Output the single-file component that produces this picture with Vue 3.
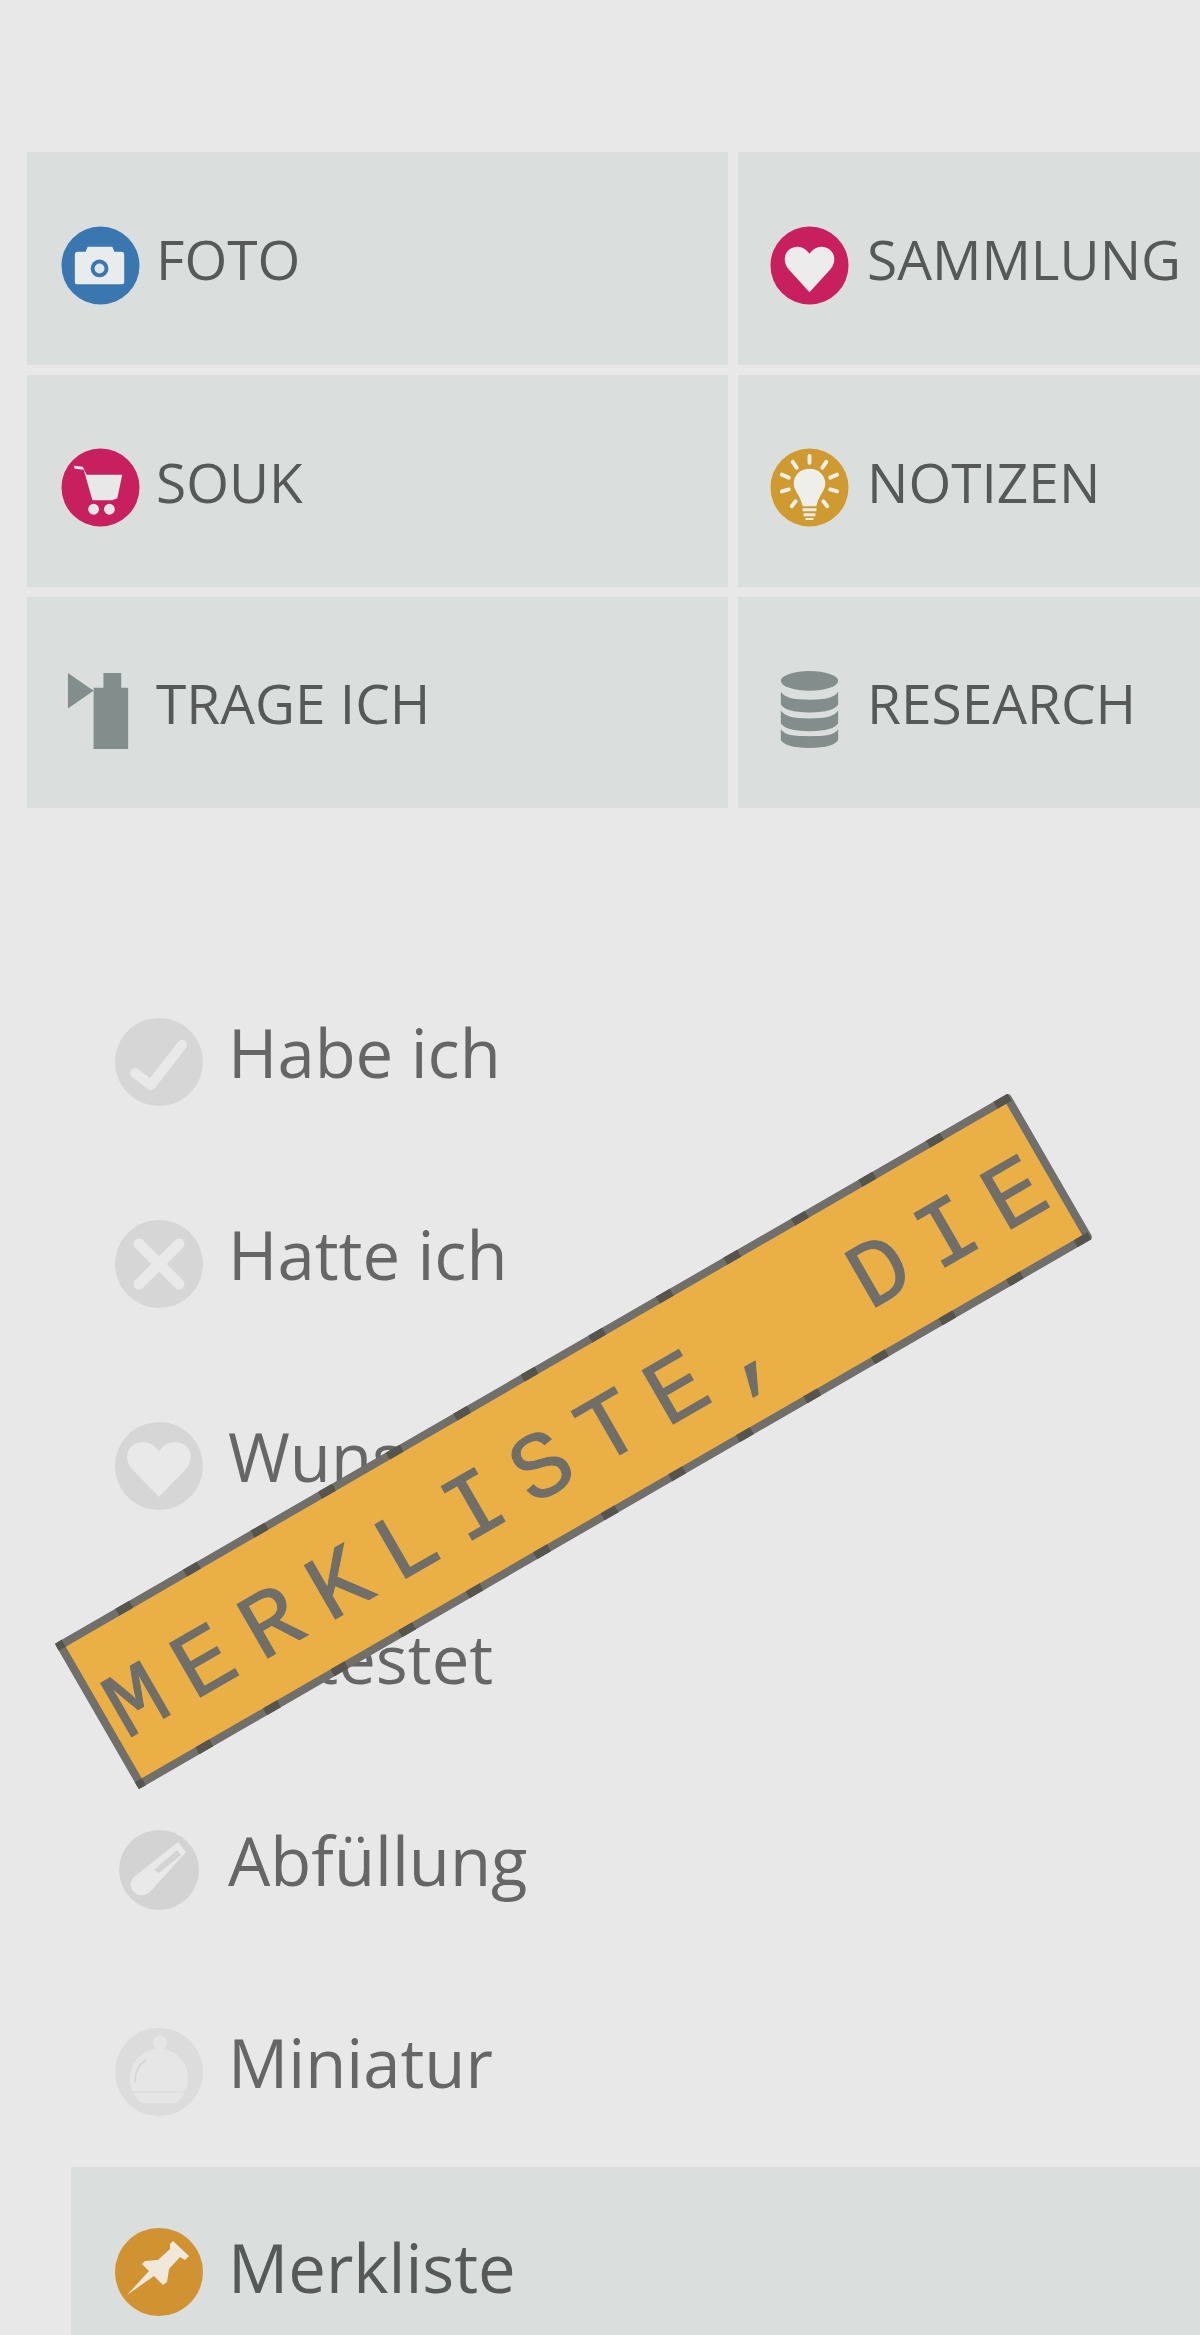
<template>
  <div class="page">
    <!-- obere Kacheln -->
    <div class="tile-grid">
      <a v-for="tile in tiles" :key="tile.label" class="tile">
        <svg class="tile-icon" viewBox="0 0 80 80" v-html="tile.icon"></svg>
        <span class="tile-label">{{ tile.label }}</span>
      </a>
    </div>

    <!-- Liste -->
    <ul class="status-list">
      <li
        v-for="row in rows"
        :key="row.label"
        class="status-row"
        :class="{ active: row.active }"
      >
        <svg class="status-icon" viewBox="0 0 88 88" v-html="row.icon"></svg>
        <span class="status-label">{{ row.label }}</span>
      </li>
    </ul>

    <!-- Hinweis-Banner -->
    <div class="banner">
      <span class="banner-text">MERKLISTE, DIE</span>
    </div>
  </div>
</template>

<script setup>
const tiles = [
  {
    label: 'FOTO',
    icon: `<circle cx="40" cy="40" r="39.5" fill="#3a77b1"/>
      <path d="M14 29q0-3 3-3h8l2-5h25l2 5h7q3 0 3 3v28q0 2-2 2H16q-2 0-2-2z" fill="#e8ecec"/>
      <circle cx="39" cy="43" r="9" fill="#3a77b1"/><circle cx="39" cy="43" r="5" fill="#dfe6e8"/>`
  },
  {
    label: 'SAMMLUNG',
    icon: `<circle cx="40" cy="40" r="39.5" fill="#c81f5e"/>
      <path d="M40 67 19 44C10 33 17 21 28 21c5 0 9 3 12 7 3-4 7-7 12-7 11 0 18 12 9 23z" fill="#ececec"/>`
  },
  {
    label: 'SOUK',
    icon: `<circle cx="40" cy="40" r="39.500" fill="#c81f5e"/>
      <path d="M13 18l9 1 4 8h36l-5 24-5 2H32l-1-3-8-28-9-1z" fill="#e8e8e8"/>
      <circle cx="33" cy="62" r="5.500" fill="#e8e8e8"/><circle cx="49" cy="62" r="5.500" fill="#e8e8e8"/>`
  },
  {
    label: 'NOTIZEN',
    icon: `<circle cx="40" cy="40" r="39.500" fill="#cf9a2f"/>
      <path d="M40 21c-10 0-16 7-16 15 0 8 7 12 9 23h14c2-11 9-15 9-23 0-8-6-15-16-15z" fill="#eeeeea"/>
      <path d="M33 61h14v3H33zM34 66h12v3H34zM36 71h8v2h-8z" fill="#eeeeea"/>
      <path d="M40 8v7M23 14l4 6M57 14l-4 6M12 27l7 3M68 27l-7 3M12 44l7-2M68 44l-7-2M22 59l4-5M58 59l-4-5" stroke="#eeeeea" stroke-width="4" stroke-linecap="round"/>`
  },
  {
    label: 'TRAGE ICH',
    icon: `<path d="M7 3v36L33 21z" fill="#828d8c"/>
      <path d="M33 18h10V3h18v15h7v62H33z" fill="#828d8c"/>`
  },
  {
    label: 'RESEARCH',
    icon: `<ellipse cx="40" cy="11" rx="29" ry="10" fill="#828d8c"/>
      <path d="M11 22c4 6 12 8 29 8s25-2 29-8v13c-3 5-12 8-29 8S14 40 11 35z" fill="#828d8c"/>
      <path d="M11 41c4 6 12 8 29 8s25-2 29-8v13c-3 5-12 8-29 8S14 59 11 54z" fill="#828d8c"/>
      <path d="M11 60c4 6 12 7 29 7s25-1 29-7v11c-3 5-12 8-29 8S14 76 11 71z" fill="#828d8c"/>`
  }
]

const grey = '#d6d6d6'
const light = '#e9e9e9'

const rows = [
  {
    label: 'Habe ich',
    icon: `<circle cx="44" cy="44" r="44" fill="${grey}"/>
      <path d="M20 55l16 12 31-40" fill="none" stroke="${light}" stroke-width="10" stroke-linecap="round" stroke-linejoin="round"/>`
  },
  {
    label: 'Hatte ich',
    icon: `<circle cx="44" cy="44" r="44" fill="${grey}"/>
      <path d="M24 24l40 40M64 24L24 64" fill="none" stroke="${light}" stroke-width="11" stroke-linecap="round"/>`
  },
  {
    label: 'Wunschliste',
    icon: `<circle cx="44" cy="44" r="44" fill="${grey}"/>
      <path d="M44 75 18 48C6 35 14 20 28 20c7 0 12 4 16 9 4-5 9-9 16-9 14 0 22 15 10 28z" fill="${light}"/>`
  },
  {
    label: 'Getestet',
    icon: `<circle cx="44" cy="44" r="44" fill="${grey}"/>`
  },
  {
    label: 'Abfüllung',
    icon: `<circle cx="44" cy="44" r="40" fill="#d3d3d3"/>
      <path d="M63 16l8 10-36 40c-6 5-12 4-16 0s-5-10 0-15z" fill="${light}"/>
      <path d="M62 24l4 5-22 18-5-3z" fill="#d3d3d3"/>`
  },
  {
    label: 'Miniatur',
    icon: `<circle cx="44" cy="44" r="44" fill="#dcdcdc"/>
      <circle cx="45" cy="15" r="7" fill="#e6e6e6"/>
      <path d="M44 21c-18 0-29 14-29 29 0 10 4 19 12 25h34c8-6 12-15 12-25 0-15-11-29-29-29z" fill="#e6e6e6"/>
      <path d="M20 54c0-11 4-18 11-22" fill="none" stroke="#d4d4d4" stroke-width="1.500" stroke-linecap="round"/>
      <path d="M18 64h52" stroke="#dcdcdc" stroke-width="1.500"/>`
  },
  {
    label: 'Merkliste',
    active: true,
    icon: `<circle cx="44" cy="44" r="44" fill="#d19232"/>
      <path d="M58 13 74 28l-4 4-5-3-11 12-2 13-4 3-9-9-27 19 22-24-7-7 3-3 13-1 12-11v-5z" fill="#efe9dc"/>`
  }
]
</script>

<style scoped>
.page {
  position: relative;
  width: 1200px;
  height: 2335px;
  overflow: hidden;
  background: #e8e8e8;
  font-family: "Open Sans", "Liberation Sans", sans-serif;
  padding-top: 152px;
  box-sizing: border-box;
}

.tile-grid {
  display: grid;
  grid-template-columns: 701px 701px;
  grid-template-rows: 213px 212px 211px;
  gap: 10px;
  margin-left: 27px;
}

.tile {
  display: flex;
  align-items: center;
  gap: 16px;
  padding-left: 34px;
  background: #dadedd;
  color: #565958;
}

.tile:nth-child(even) {
  gap: 18px;
  padding-left: 32px;
}

.tile-icon {
  width: 79px;
  height: 79px;
  flex: none;
  margin-top: 13px;
}

.tile-label {
  font-size: 55px;
  font-weight: 400;
  line-height: 1;
}

.status-list {
  list-style: none;
  margin: 153px 0 0 71px;
  padding: 0;
}

.status-row {
  display: flex;
  align-items: center;
  gap: 25px;
  height: 202px;
  padding-left: 44px;
  color: #666;
  font-size: 67px;
}

.status-label {
  margin-bottom: 20px;
}

.status-row.active {
  background: #dadedd;
  color: #565958;
  height: 210px;
  margin-top: -6px;
}

.status-row.active .status-label {
  margin-bottom: 10px;
}

.status-icon {
  width: 88px;
  height: 88px;
  flex: none;
}

/* liegt schräg über der Liste */
.banner {
  position: absolute;
  left: 23px;
  top: 1357px;
  width: 1102px;
  height: 168px;
  box-sizing: border-box;
  transform: rotate(-30deg);
  background: #ebb045;
  border: 8px solid #706f6c;
  border-radius: 4px;
  display: flex;
  align-items: center;
  justify-content: center;
}

.banner::before,
.banner::after {
  content: "";
  position: absolute;
  left: -8px;
  right: -8px;
  height: 8px;
  background: repeating-linear-gradient(
    90deg,
    #55544f 0 8px,
    transparent 8px 70px,
    #55544f 70px 78px
  );
}

.banner::before {
  top: -8px;
}

.banner::after {
  bottom: -8px;
}

.banner-text {
  font-family: "Liberation Mono", "DejaVu Sans Mono", monospace;
  font-size: 94px;
  letter-spacing: 21.600px;
  margin-right: -18px;
  margin-top: 20px;
  color: #6f6e69;
  -webkit-text-stroke: 1px #6f6e69;
  white-space: nowrap;
  line-height: 1;
}
</style>

<style>
html,
body {
  margin: 0;
  background: #e8e8e8;
}
</style>
